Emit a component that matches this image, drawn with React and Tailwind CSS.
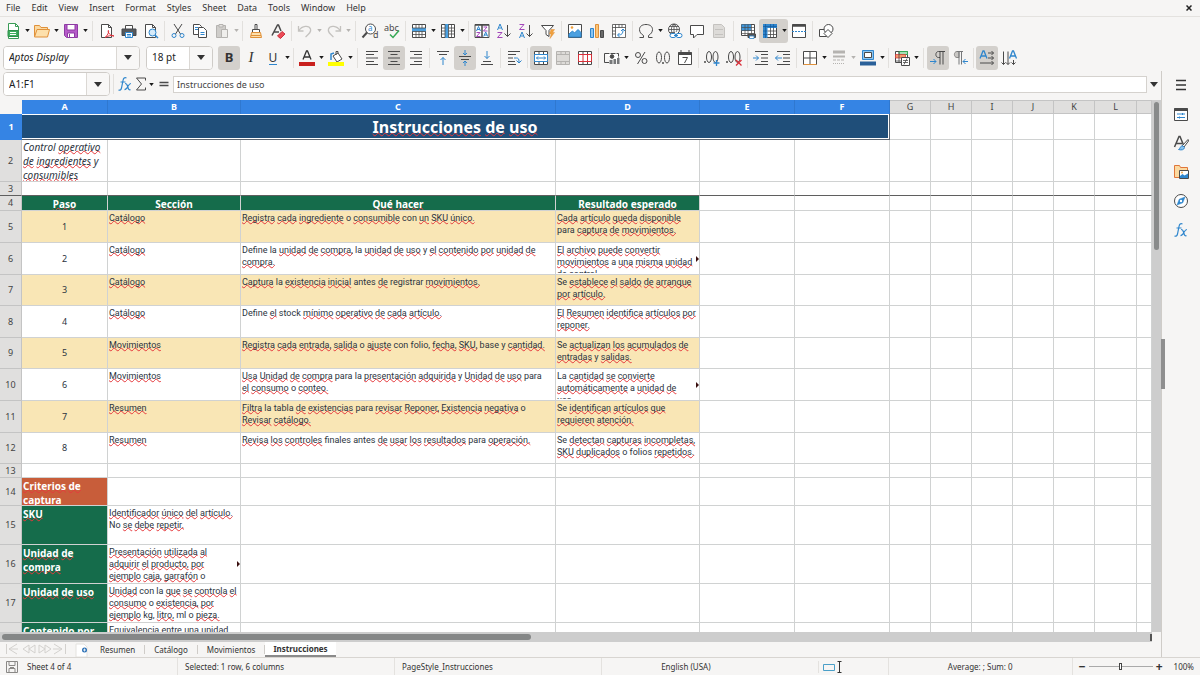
import { useState } from 'react';

const ICONS = {
  newSheet: (
    <>
      <path d="M3.5.5h7l3 3v12h-10z" fill="#fff" stroke="#3a9c56" />
      <path d="M10.5.5v3h3" stroke="#3a9c56" />
      <path d="M3 7.500h10v6H3z" fill="#3fae5f" stroke="#2f8f4b" />
      <path d="M5 9.500h6M5 11.500h6" stroke="#fff" />
    </>
  ),
  open: (
    <>
      <path d="M.5 13.500V2.500h5l1.500 2h6.500v2" fill="#fbd9a0" stroke="#e0913a" />
      <path d="M.5 14L3 6.500h12.500L13.500 14z" fill="#fde0ac" stroke="#e0913a" />
    </>
  ),
  save: (
    <>
      <path d="M1.500 1.500h13v13h-11l-2-2z" fill="#b65bc9" stroke="#8d3ba3" />
      <path d="M4 1.500h8V7H4z" fill="#fff" stroke="#8d3ba3" />
      <path d="M4.500 10h7v4.500h-7z" fill="#fff" stroke="#8d3ba3" />
      <path d="M6.500 11v3" stroke="#8d3ba3" />
    </>
  ),
  pdf: (
    <>
      <path d="M2.500 1.500h7l3 3v10h-10z" fill="#fff" />
      <path d="M9.500 1.500v3h3" />
      <path d="M6 14.500c3-2 4-6 3.500-7-.8-.6-.6 5 5.500 5.500-3-1.200-6 0-9 1.500z" stroke="#e0303a" />
    </>
  ),
  print: (
    <>
      <path d="M4.500 6V2.500h7V6" fill="#fff" />
      <path d="M1 6h14v6.500H1z" fill="#56595c" stroke="#44474a" />
      <path d="M4.500 9.500h7v5h-7z" fill="#fff" stroke="#2f86cd" />
      <path d="M6 11.500h4M6 13h4" stroke="#2f86cd" />
    </>
  ),
  preview: (
    <>
      <path d="M2.500 1.500h7l3 3v10h-10z" fill="#fff" />
      <path d="M9.500 1.500v3h3" />
      <circle cx="9.500" cy="9.500" r="3.500" fill="#d6ebfa" stroke="#2f86cd" />
      <path d="M12 12l3 3" stroke="#2f86cd" strokeWidth="1.500" />
    </>
  ),
  cut: (
    <>
      <path d="M4 1l6.500 10M12 1L5.500 11" />
      <circle cx="4" cy="12.500" r="2" stroke="#2f86cd" />
      <circle cx="12" cy="12.500" r="2" stroke="#2f86cd" />
    </>
  ),
  copy: (
    <>
      <path d="M1.500 1.500h6l2 2v8h-8z" fill="#fff" />
      <path d="M6.500 4.500h5l3 3v7h-8z" fill="#fff" />
      <path d="M3 4.500h3M3 6.500h3M8.500 9.500h4M8.500 11.500h4" stroke="#2f86cd" />
    </>
  ),
  paste: (
    <g stroke="#b5b3b0">
      <path d="M2.500 2.500h9v12h-9z" fill="#cfcdca" />
      <path d="M5 1.500h4v2.500H5z" fill="#e4e2df" />
      <path d="M7.500 6.500h6v8h-6z" fill="#efeeec" />
    </g>
  ),
  brush: (
    <>
      <path d="M7 1.500h2v5H7zM4.500 6.500h7v3h-7z" fill="#fff" />
      <path d="M3.500 9.500h9l1 5h-11z" fill="#fde0ac" stroke="#e0913a" />
      <path d="M3 12.500h10" stroke="#e0913a" />
    </>
  ),
  clear: (
    <>
      <path d="M2 12.500L7.500 2h1L11 8M4 9h5" strokeWidth="1.500" />
      <path d="M7.500 13l4.500-4.500 3 2.500-4.500 4.500z" fill="#ed4b57" stroke="#c9303c" />
    </>
  ),
  undo: <path d="M1.500 3v5h5M2 7.500C5 2.500 12 2 13.500 6c1 3-1.500 5-5 8" stroke="#c4c2bf" strokeWidth="1.300" />,
  redo: <path d="M14.500 3v5h-5M14 7.500C11 2.500 4 2 2.500 6c-1 3 1.500 5 5 8" stroke="#c4c2bf" strokeWidth="1.300" />,
  find: (
    <>
      <circle cx="8.500" cy="6" r="5" fill="#fff" />
      <path d="M5 9.500L.5 14.500" strokeWidth="2" />
      <text x="6" y="8" fontSize="8" fill="#2f86cd" stroke="none" fontFamily="Noto Sans">a</text>
      <text x="11" y="15" fontSize="9" fill="#4a4a4a" stroke="none" fontFamily="Noto Sans">d</text>
    </>
  ),
  spell: (
    <>
      <text x="0" y="8" fontSize="9" fill="#4a4a4a" stroke="none" fontFamily="Noto Sans">abc</text>
      <path d="M6 11.500l3 3 6-7" stroke="#35a854" strokeWidth="1.500" />
    </>
  ),
  rows: (
    <>
      <path d="M1.500 1.500h13v13h-13z" fill="#fff" />
      <path d="M1 5h14v3.500H1z" fill="#4ba0e0" stroke="none" />
      <path d="M1.500 5h13M1.500 8.500h13M1.500 11.500h13M5 1.500v3.500M8 1.500v3.500M11 1.500v3.500M5 8.500v6M8 8.500v6M11 8.500v6" strokeWidth=".8" />
    </>
  ),
  cols: (
    <>
      <path d="M1.500 1.500h13v13h-13z" fill="#fff" />
      <path d="M5 1h3.500v14H5z" fill="#4ba0e0" stroke="none" />
      <path d="M5 1.500v13M8.500 1.500v13M11.500 1.500v13M1.500 5H5M1.500 8H5M1.500 11H5M8.500 5h6M8.500 8h6M8.500 11h6" strokeWidth=".8" />
    </>
  ),
  sort: (
    <>
      <path d="M1 1.500h14v13H1z" fill="#fff" />
      <path d="M1 2h14M8 2v12.500" strokeWidth="1.500" />
      <path d="M2.500 8L4.500 3.500 6.500 8M3 6.500h3M9.700 13.500l2-4.500 2 4.500M10.200 12h3" stroke="#2f86cd" />
      <path d="M2.500 9.500h3.500l-3.500 4h4M9.500 4h3.500L9.500 8h4" stroke="#a347ba" />
    </>
  ),
  az: (
    <>
      <path d="M1.500 7L4 1l2.500 6M2.500 5h3" stroke="#2f86cd" />
      <path d="M1.500 9.500H6l-4.500 5h5" stroke="#a347ba" />
      <path d="M11.500 2v11.500M8.500 10.500l3 3 3-3" />
    </>
  ),
  za: (
    <>
      <path d="M1.500 1.500H6l-4.500 5h5" stroke="#a347ba" />
      <path d="M1.500 15L4 9l2.500 6M2.500 13h3" stroke="#2f86cd" />
      <path d="M11.500 2v11.500M8.500 10.500l3 3 3-3" />
    </>
  ),
  filter: (
    <>
      <path d="M1.500 2.500h12l-4.500 5v6l-3-2v-4z" fill="#fff" />
      <path d="M11 6.500h3.500l-2 3h2l-4.500 6 1.200-4.500H9.500z" fill="#f0a03c" stroke="#e0913a" strokeWidth=".5" />
    </>
  ),
  image: (
    <>
      <path d="M1.500 1.500h13v13h-13z" fill="#fff" />
      <path d="M2 14v-3l3.500-3 2 2L11 6.500l3 3V14z" fill="#4ba0e0" stroke="#2f86cd" />
      <circle cx="5" cy="4.500" r="1.300" fill="#f0a03c" stroke="none" />
    </>
  ),
  chart: (
    <>
      <path d="M1.500 5.500h3v9h-3z" fill="#8cc5f0" stroke="#2f86cd" />
      <path d="M6.500 1.500h3v13h-3z" fill="#fbc67c" stroke="#e0913a" />
      <path d="M11.500 7.500h3v7h-3z" fill="#6a6a6a" />
    </>
  ),
  pivot: (
    <>
      <path d="M1.500 1.500h13v13h-13zM1.500 4.500h13M4.500 1.500v13M8 1.500v3M11 1.500v3M1.500 8h3M1.500 11h3" fill="#fff" strokeWidth=".8" />
      <path d="M12 6.500c0 4-1 5.500-5 5.500M10 8l2-2 2 2M8.500 10l-2 2 2 2" stroke="#2f86cd" />
    </>
  ),
  omega: <path d="M1.500 14.500h4v-2C3 11 1.500 9 1.500 6.500 1.500 3.500 4 1.500 8 1.500s6.500 2 6.500 5c0 2.500-1.500 4.500-4 6v2h4" />,
  link: (
    <>
      <circle cx="7" cy="6.500" r="5.500" fill="#fff" />
      <path d="M1.500 6.500h11M7 1v11M3 3.500h8M3 9.500h5M7 1C3.500 4 3.500 9 7 12M7 1c3.500 3 3.500 6 2 8" strokeWidth=".8" />
      <rect x="3" y="10.500" width="6" height="4" rx="2" fill="#fff" stroke="#2f86cd" />
      <rect x="9" y="10.500" width="6" height="4" rx="2" fill="#fff" stroke="#2f86cd" />
      <path d="M7 12.500h4" stroke="#2f86cd" />
    </>
  ),
  comment: <path d="M1.500 2.500h13v9H8L4.500 15v-3.500h-3z" fill="#fff" />,
  header: (
    <g stroke="#c4c2bf">
      <path d="M2.500 1.500h8l3 3v10h-11z" fill="#dddbd8" />
      <path d="M4 6.500h8M4 11.500h8" />
    </g>
  ),
  printRange: (
    <>
      <path d="M1.500 1.500h13v11h-13z" fill="#fff" />
      <path d="M1.500 1.500H11V8H1.500z" fill="#3f97dc" stroke="none" />
      <path d="M1.500 4.500h13M1.500 7.500h13M1.500 10.500h13M5 1.500v11M8 1.500v11M11.500 1.500v11" strokeWidth=".7" />
      <path d="M8 11h7.500v3.500H8z" fill="#56595c" />
      <path d="M9.500 13h4.500v2.500H9.500z" fill="#fff" stroke="#2f86cd" strokeWidth=".8" />
    </>
  ),
  freeze: (
    <>
      <path d="M1.500 1.500h13v13h-13z" fill="#fff" />
      <path d="M1 1h14v4H5.500v10H1z" fill="#2f86cd" stroke="none" />
      <path d="M8.500 5v10M11.500 5v10M5.500 8h9M5.500 11.500h9" strokeWidth=".8" />
      <path d="M1 3.500h14M3.500 1v14M1 8h4M1 11.500h4M8.500 1v4M11.500 1v4" stroke="#155a9c" strokeWidth=".7" />
    </>
  ),
  split: (
    <>
      <path d="M1.500 1.500h13v13h-13z" fill="#fff" />
      <path d="M1.500 2.500h13" strokeWidth="2.500" />
      <path d="M1 8.500h14" stroke="#2f86cd" strokeDasharray="2 1" />
    </>
  ),
  shapes: (
    <>
      <path d="M1.500 6.500h7v7h-7z" fill="#fff" />
      <circle cx="10.500" cy="6" r="4.500" fill="#fff" />
      <path d="M10 6.500l4 4-4 4-4-4z" fill="#fff" />
    </>
  ),
  fontColor: (
    <>
      <path d="M4 9.500L7.500 1h1L12 9.500M5.500 7h5" stroke="#333" strokeWidth="1.300" />
      <path d="M0 14h16" stroke="#c9211e" strokeWidth="4" />
    </>
  ),
  highlight: (
    <>
      <path d="M3 10V4l3-1" stroke="#2f86cd" strokeWidth="1.500" />
      <path d="M5 6l5-3 4 6-5 3zM10 3V1.500h-2V5" fill="#fff" />
      <path d="M0 14h16" stroke="#ffff00" strokeWidth="4" />
    </>
  ),
  left: <path d="M2 1.500h12M2 4.500h8M2 8h12M2 11.500h8M2 14.500h12" />,
  center: <path d="M2 1.500h12M4.500 4.500h7M2 8h12M4.500 11.500h7M2 14.500h12" />,
  right: <path d="M2 1.500h12M6 4.500h8M2 8h12M6 11.500h8M2 14.500h12" />,
  top: (
    <>
      <path d="M2 1.500h12M4 4.500h8" />
      <path d="M8 15V7.500M5.500 10L8 7.500l2.500 2.500" stroke="#2f86cd" />
    </>
  ),
  middle: (
    <>
      <path d="M2 6.500h12M4 9.500h8" />
      <path d="M8 0v5M6 3l2 2 2-2M8 16v-5M6 13l2-2 2 2" stroke="#2f86cd" />
    </>
  ),
  bottom: (
    <>
      <path d="M4 11.500h8M2 14.500h12" />
      <path d="M8 1v7.500M5.500 6L8 8.500 10.500 6" stroke="#2f86cd" />
    </>
  ),
  wrap: (
    <>
      <path d="M2 1.500h12M2 4.500h8M2 8h5M2 11.500h7M2 14.500h8" />
      <path d="M8 8h2.500c2 0 2.500 1 2.500 4M10.500 10.500l2.500 2.500 2.500-2.500" stroke="#2f86cd" />
    </>
  ),
  merge: (
    <>
      <path d="M1.500 1.500h13v13h-13zM6 1.500v3M10.500 1.500v3M6 11.500v3M10.500 11.500v3" fill="#fff" />
      <path d="M1.500 4.500h13v7h-13z" fill="#fff" stroke="#2f86cd" />
      <path d="M3.500 8h9M5 6.500L3.500 8 5 9.500M11 6.500L12.500 8 11 9.500" stroke="#2f86cd" />
    </>
  ),
  mergeOff: (
    <path d="M1.500 1.500h13v13h-13zM1.500 4.500h13M1.500 11.500h13M6 1.500v3M10.500 1.500v3M6 11.500v3M10.500 11.500v3" fill="#dddbd8" stroke="#b5b3b0" />
  ),
  unmerge: (
    <>
      <path d="M1.500 1.500h13v13h-13zM6 1.500v3M10.500 1.500v3M6 11.500v3M10.500 11.500v3" fill="#fff" />
      <path d="M1.500 4.500h13v7h-13zM6 4.500v7M10.500 4.500v7" stroke="#d9303a" />
    </>
  ),
  currency: (
    <>
      <path d="M.5 3.500h14v8" fill="#fff" strokeDasharray="5 1" />
      <path d="M.5 3.500v9H5" />
      <circle cx="8" cy="6.500" r="1.800" fill="#4a4a4a" />
      <path d="M5.500 10h3v4h-3zM9.500 9h2.500v5H9.500zM13 8h2.500v6H13z" fill="#77797b" stroke="none" />
    </>
  ),
  percent: (
    <>
      <circle cx="5" cy="5" r="2.500" />
      <circle cx="11.500" cy="11" r="2.500" />
      <path d="M12 2L4.500 14" />
    </>
  ),
  number: (
    <>
      <ellipse cx="4" cy="7.500" rx="2.500" ry="5.500" />
      <ellipse cx="12" cy="7.500" rx="2.500" ry="5.500" />
      <path d="M8 12v2" strokeWidth="1.500" />
    </>
  ),
  date: (
    <>
      <path d="M1.500 2.500h13v12h-13z" fill="#fff" />
      <path d="M1.500 3.500h13" strokeWidth="3" />
      <path d="M4 0v3M12 0v3M5.500 7.500h5l-3 5.500" />
    </>
  ),
  addDecimal: (
    <>
      <path d="M1 11v2" strokeWidth="1.500" />
      <ellipse cx="5" cy="7" rx="2.500" ry="5.500" />
      <ellipse cx="11.500" cy="7" rx="2.500" ry="5.500" />
      <path d="M9.500 13h6M12.500 10v6" stroke="#2f86cd" strokeWidth="1.300" />
    </>
  ),
  removeDecimal: (
    <>
      <path d="M1 11v2" strokeWidth="1.500" />
      <ellipse cx="5" cy="7" rx="2.500" ry="5.500" />
      <ellipse cx="11.500" cy="7" rx="2.500" ry="5.500" />
      <path d="M10 10l5.500 5.500M15.500 10L10 15.500" stroke="#d9303a" strokeWidth="1.300" />
    </>
  ),
  indent: (
    <>
      <path d="M2 1.500h13M8 4.500h7M8 8h7M8 11.500h7M2 14.500h13" />
      <path d="M0 8h5.500M3 5.500L5.500 8 3 10.500" stroke="#2f86cd" />
    </>
  ),
  outdent: (
    <>
      <path d="M2 1.500h13M8 4.500h7M8 8h7M8 11.500h7M2 14.500h13" />
      <path d="M.5 8H7M3 5.500L.5 8 3 10.500" stroke="#2f86cd" />
    </>
  ),
  borders: (
    <>
      <path d="M1.500 1.500h13v13h-13z" fill="#fff" />
      <path d="M8 1.500v13M1.500 8h13" />
      <path d="M1.500 14.500h13" stroke="#e0913a" />
    </>
  ),
  lineStyle: (
    <g stroke="#b5b3b0">
      <path d="M2 2h12" strokeWidth="3" />
      <path d="M2 6.500h12" strokeWidth="2" />
      <path d="M2 10h12" strokeDasharray="3 1" />
      <path d="M2 13.500h12" strokeDasharray="1 1" />
    </g>
  ),
  borderColor: (
    <>
      <path d="M2.500.5h11v9h-11z" fill="#8cc5f0" stroke="#2f86cd" />
      <path d="M4.500 2.500h7v5h-7z" fill="#fff" />
      <path d="M0 13.500h16" stroke="#2a6099" strokeWidth="4" />
    </>
  ),
  conditional: (
    <>
      <path d="M1.500 1.500h12v11h-12z" fill="#fff" />
      <path d="M5 1.500h8.500v3H5z" fill="#a5dfb5" stroke="#35a854" />
      <path d="M1.500 4.500h10v3.500h-10z" fill="#f59a6c" stroke="#d9303a" strokeWidth=".7" />
      <path d="M1.500 11h6M5 1.500v11" strokeWidth=".8" />
      <path d="M7.500 7.500h8v8h-8z" fill="#fff" />
      <path d="M9 10.500h5M9 12.500h5M13 8.500l-3 6" strokeWidth=".8" />
    </>
  ),
  ltr: (
    <>
      <path d="M15 1.500H8.500C5 1.500 5 7.500 8.500 7.500H10M10 1.500v13M13 1.500v13" />
      <path d="M0 11.500h6M3.500 9L6 11.500 3.500 14" stroke="#2f86cd" />
    </>
  ),
  rtl: (
    <>
      <path d="M5 1.500C1.500 1.500 1.500 7.500 5 7.500h2v-6z" fill="#c9c7c4" stroke="#8a8886" />
      <path d="M11 1.500H5M7 1.500v13M9.500 1.500v13" stroke="#77797b" />
      <path d="M16 11.500h-5M13.500 9L11 11.500l2.500 2.500" stroke="#2f86cd" />
    </>
  ),
  horizontal: (
    <>
      <path d="M1 8.500L4 1h1l3 7.500M2 6h5" stroke="#2f86cd" strokeWidth="1.300" />
      <path d="M9 3h5.500M12.500 1l2 2-2 2M9 8h5.500M12.500 6l2 2-2 2M1 13h13.500M12.500 11l2 2-2 2" />
    </>
  ),
  vertical: (
    <>
      <path d="M8.500 8.500L11.500 1h1l3 7.500M9.500 6h5" stroke="#2f86cd" strokeWidth="1.300" />
      <path d="M2.500 1.500v13M.5 12.500l2 2 2-2M7 1.500v13M5 12.500l2 2 2-2M12.500 10v4.500M10.500 12.500l2 2 2-2" />
    </>
  ),
  fx: (
    <g stroke="#2f86cd" strokeWidth="1.200">
      <path d="M9.500 2C7.500 1 6.500 2 6 4.500L4.500 12C4 14 3 14.500 1.500 14M3.500 6h5" />
      <path d="M8 7.500c1.500 0 2 .5 2.500 2.500l.8 2.500c.5 1.500 1 1.500 2.200 1.200M14 7.500c-1.500 0-2 1-3 2.700-1 2-1.800 3.500-3.500 3.500" />
    </g>
  ),
  sum: <path d="M12.500 4.500v-2.500h-9L8.500 8l-5 6h9v-2.500" />,
  equals: <path d="M3.500 6.500h9M3.500 9.500h9" strokeWidth="1.500" />,
  menu: <path d="M3 3.500h10M3 8h10M3 12.500h10" stroke="#333" strokeWidth="1.500" />,
  properties: (
    <>
      <path d="M1.500 2.500h13v12h-13z" fill="#fff" />
      <path d="M1.500 3.500h13" strokeWidth="3" />
      <path d="M4 8h8M4 11.500h8M9.500 7v2M6.500 10.500v2" stroke="#2f86cd" />
    </>
  ),
  styles: (
    <>
      <path d="M1.500 12L6 1.500h1L10.500 10M3 8.500h6" strokeWidth="1.500" />
      <path d="M15 4.500L9.500 10.500l1.500 1.500 4.500-6z" fill="#fff" />
      <path d="M10 11c-2-.5-2.500 1-3 2-.5 1-1.500 1.500-1.500 1.500 3 .8 5.500.5 6-2z" fill="#8cc5f0" stroke="#2f86cd" />
    </>
  ),
  gallery: (
    <>
      <path d="M1.500 13.500v-12h5l1 2h7v10z" fill="#fbd9a0" stroke="#e0763a" />
      <path d="M6.500 6.500h9v8h-9z" fill="#fff" />
      <path d="M7 14v-2l2.500-2 2 1.500L15 9.500V14z" fill="#2f86cd" stroke="none" />
      <circle cx="9" cy="8.500" r=".9" fill="#f0a03c" stroke="none" />
    </>
  ),
  navigator: (
    <>
      <circle cx="8" cy="8" r="6.500" fill="#fff" />
      <path d="M12 4L9.800 9.800 4 12l2.200-5.800z" fill="#2f86cd" stroke="#2f86cd" strokeWidth=".5" />
      <circle cx="8" cy="8" r="1.200" fill="#fff" stroke="none" />
    </>
  ),
  saveState: (
    <g stroke="#8a8886">
      <path d="M2.500 2.500h11v11h-11zM5 2.500v4h6v-4M5 13.500v-4h6v4" />
      <path d="M6 8.500h4" />
    </g>
  ),
};

function Icon({ name }) {
  return (
    <svg viewBox="0 0 16 16" className="size-4 shrink-0 overflow-visible" fill="none" stroke="#4a4a4a" aria-hidden="true">
      {ICONS[name]}
    </svg>
  );
}

function Caret({ dim }) {
  return (
    <svg viewBox="0 0 6 4" className="h-[3px] w-[5px] shrink-0" aria-hidden="true">
      <path d="M0 0h6L3 4z" fill={dim ? '#b5b3b0' : '#1a1a1a'} />
    </svg>
  );
}

function Tool({ name, active, menu, dim, children }) {
  return (
    <div className={active ? 'flex items-center rounded-[3px] bg-[#d3d0cc]' : 'flex items-center'}>
      <button type="button" aria-label={name} className="flex h-6 w-[22px] items-center justify-center">
        {children || <Icon name={name} />}
      </button>
      {menu && (
        <button type="button" aria-label={name + ' options'} className="flex h-6 w-[7px] items-center justify-center">
          <Caret dim={dim} />
        </button>
      )}
    </div>
  );
}

function Sep({ wide }) {
  return (
    <div className={wide ? 'flex w-[7px] justify-center' : 'flex w-[5px] justify-center'}>
      <div className="h-5 w-px bg-[#e2e0dd]" />
    </div>
  );
}

function Combo({ label, value, box, input }) {
  return (
    <div className={'flex h-6 overflow-hidden rounded-[4px] border border-[#cfccc8] bg-white ' + box}>
      <input aria-label={label} defaultValue={value} className={'min-w-0 flex-1 bg-white pl-[5px] text-[10px] text-[#222] outline-none ' + input} />
      <button type="button" aria-label={label + ' list'} className="flex w-[23px] items-center justify-center border-l border-[#dbd8d4] bg-[#f8f7f6]">
        <svg viewBox="0 0 8 5" className="h-[5px] w-2" aria-hidden="true"><path d="M0 0h8L4 5z" fill="#333" /></svg>
      </button>
    </div>
  );
}

const MENUS = ['File', 'Edit', 'View', 'Insert', 'Format', 'Styles', 'Sheet', 'Data', 'Tools', 'Window', 'Help'];
const COLUMNS = ['A', 'B', 'C', 'D', 'E', 'F', 'G', 'H', 'I', 'J', 'K', 'L'];
const EMPTY = ['E', 'F', 'G', 'H', 'I', 'J', 'K', 'L', ''];

// words the English dictionary accepts, so they get no red wave
const KNOWN = ['a', 'o', 'y', 'la', 'La', 'con', 'para', 'Define', 'antes', 'registrar', 'stock', 'folio,', 'folios', 'base', 'tabla', 'finales', 'Se', 'No', 'Control', 'kg,', 'ml', 'entre'];

function Spell({ text }) {
  return text.split('\n').map((line) => (
    <span key={line} className="block whitespace-nowrap">
      {line.split(' ').map((word, i) => (
        <span key={i}>
          {i > 0 && ' '}
          {KNOWN.includes(word) ? word : (
            <span className="underline decoration-[#e5383b] decoration-wavy decoration-1 underline-offset-[-1px] [text-decoration-skip-ink:none]">{word}</span>
          )}
        </span>
      ))}
    </span>
  ));
}

const STEPS = [
  { n: 5, h: 'h-8', section: 'Catálogo', what: 'Registra cada ingrediente o consumible con un SKU único.', result: 'Cada artículo queda disponible\npara captura de movimientos.' },
  { n: 6, h: 'h-8', section: 'Catálogo', what: 'Define la unidad de compra, la unidad de uso y el contenido por unidad de\ncompra.', result: 'El archivo puede convertir\nmovimientos a una misma unidad\nde control.', more: true },
  { n: 7, h: 'h-[31px]', section: 'Catálogo', what: 'Captura la existencia inicial antes de registrar movimientos.', result: 'Se establece el saldo de arranque\npor artículo.' },
  { n: 8, h: 'h-8', section: 'Catálogo', what: 'Define el stock mínimo operativo de cada artículo.', result: 'El Resumen identifica artículos por\nreponer.' },
  { n: 9, h: 'h-[31px]', section: 'Movimientos', what: 'Registra cada entrada, salida o ajuste con folio, fecha, SKU, base y cantidad.', result: 'Se actualizan los acumulados de\nentradas y salidas.' },
  { n: 10, h: 'h-8', section: 'Movimientos', what: 'Usa Unidad de compra para la presentación adquirida y Unidad de uso para\nel consumo o conteo.', result: 'La cantidad se convierte\nautomáticamente a unidad de\nuso.', more: true },
  { n: 11, h: 'h-8', section: 'Resumen', what: 'Filtra la tabla de existencias para revisar Reponer, Existencia negativa o\nRevisar catálogo.', result: 'Se identifican artículos que\nrequieren atención.' },
  { n: 12, h: 'h-[31px]', section: 'Resumen', what: 'Revisa los controles finales antes de usar los resultados para operación.', result: 'Se detectan capturas incompletas,\nSKU duplicados o folios repetidos.' },
];

const TERMS = [
  { n: 15, term: 'SKU', text: 'Identificador único del artículo.\nNo se debe repetir.' },
  { n: 16, term: 'Unidad de\ncompra', text: 'Presentación utilizada al\nadquirir el producto, por\nejemplo caja, garrafón o', more: true },
  { n: 17, term: 'Unidad de uso', text: 'Unidad con la que se controla el\nconsumo o existencia, por\nejemplo kg, litro, ml o pieza.' },
  { n: '', term: 'Contenido por', text: 'Equivalencia entre una unidad' },
];

const HEAD = 'border-r border-b border-[#c4c4c4] bg-[#e0dfde] p-0 font-normal text-[9px] text-[#444]';
const CELL = 'relative border-r border-b border-[#d0d2d2] p-0';
const BODY = "overflow-hidden pt-px pl-px font-[Roboto,'Noto_Sans',sans-serif] text-[9px]";

function RowHead({ children, edge }) {
  return <th scope="row" className={edge ? HEAD + ' border-b-[#5f5f5f]' : HEAD}>{children}</th>;
}

function Blanks({ from = 0, edge }) {
  return EMPTY.slice(from).map((c, i) => <td key={i} className={edge ? CELL + ' border-b-[#5f5f5f]' : CELL} />);
}

function More() {
  return <span className="absolute top-1/2 right-0 -translate-y-1/2 border-y-[3px] border-l-[3px] border-y-transparent border-l-[#3a1010]" />;
}

function Sheet() {
  return (
    <table className="w-full table-fixed border-separate border-spacing-0 leading-3 text-[#2c3440]">
      <colgroup>
        <col className="w-[22px]" />
        <col className="w-[86px]" />
        <col className="w-[133px]" />
        <col className="w-[315px]" />
        <col className="w-[144px]" />
        <col className="w-[95px]" />
        <col className="w-[95px]" />
        <col className="w-[41px]" />
        <col className="w-[41px]" />
        <col className="w-[41px]" />
        <col className="w-[41px]" />
        <col className="w-[41px]" />
        <col className="w-[42px]" />
        <col />
      </colgroup>
      <thead>
        <tr className="h-[14px]">
          <td className="bg-[#f6f5f4]" />
          {COLUMNS.map((c, i) => (
            <th key={c} scope="col" className={i < 6 ? 'border-r border-r-[#2f78d0] bg-[#3584e4] p-0 text-[9px] font-bold text-white' : HEAD + ' border-t'}>
              {c}
            </th>
          ))}
          <td className={HEAD + ' border-t'} />
        </tr>
      </thead>
      <tbody>
        <tr className="h-[26px]">
          <th scope="row" className="bg-[#3584e4] p-0 text-[9px] font-bold text-white">1</th>
          <td colSpan={6} className="border-r border-b border-[#5a6470] bg-white p-0 align-top">
            <div className="flex h-[25px] items-center justify-center border border-l-0 border-white bg-[#1f4e79] pt-px text-[16px] leading-5 font-bold text-white">
              <Spell text="Instrucciones de uso" />
            </div>
          </td>
          <Blanks from={2} />
        </tr>
        <tr className="h-[42px]">
          <RowHead>2</RowHead>
          <td className={CELL + ' align-top'}>
            <div className="h-[41px] overflow-hidden pl-px text-[10px] leading-[14px] italic">
              <Spell text={'Control operativo\nde ingredientes y\nconsumibles'} />
            </div>
          </td>
          <td className={CELL} /><td className={CELL} /><td className={CELL} />
          <Blanks />
        </tr>
        <tr className="h-[14px]">
          <RowHead edge>3</RowHead>
          {['A', 'B', 'C', 'D'].map((c) => <td key={c} className={CELL + ' border-b-[#5f5f5f]'} />)}
          <Blanks edge />
        </tr>
        <tr className="h-[15px]">
          <RowHead>4</RowHead>
          {['Paso', 'Sección', 'Qué hacer', 'Resultado esperado'].map((t) => (
            <td key={t} className={CELL + ' bg-[#156c4b] text-center align-top text-[10px] font-bold text-white'}>
              <div className="h-[14px] overflow-hidden leading-4"><Spell text={t} /></div>
            </td>
          ))}
          <Blanks />
        </tr>
        {STEPS.map((s, i) => {
          const cell = i % 2 === 0 ? CELL + ' bg-[#f9e6b5]' : CELL;
          return (
            <tr key={s.n} className={s.h}>
              <RowHead>{s.n}</RowHead>
              <td className={cell + ' text-center text-[9px]'}>{i + 1}</td>
              <td className={cell + ' align-top'}><div className={BODY + ' h-[30px]'}><Spell text={s.section} /></div></td>
              <td className={cell + ' align-top'}><div className={BODY + ' h-[30px]'}><Spell text={s.what} /></div></td>
              <td className={cell + ' align-top'}>
                <div className={BODY + ' h-[30px]'}><Spell text={s.result} /></div>
                {s.more && <More />}
              </td>
              <Blanks />
            </tr>
          );
        })}
        <tr className="h-[14px]">
          <RowHead>13</RowHead>
          <td className={CELL} /><td className={CELL} /><td className={CELL} /><td className={CELL} />
          <Blanks />
        </tr>
        <tr className="h-7">
          <RowHead>14</RowHead>
          <td className={CELL + ' bg-[#c85d3a] align-top text-[10px] font-bold text-white'}>
            <div className="h-[27px] overflow-hidden pt-px pl-px leading-[14px]"><Spell text={'Criterios de\ncaptura'} /></div>
          </td>
          <td className={CELL} /><td className={CELL} /><td className={CELL} />
          <Blanks />
        </tr>
        {TERMS.map((t) => (
          <tr key={t.term} className="h-[39px]">
            <RowHead>{t.n}</RowHead>
            <td className={CELL + ' bg-[#156c4b] align-top text-[10px] font-bold text-white'}>
              <div className="h-[38px] overflow-hidden pt-px pl-px leading-[14px]"><Spell text={t.term} /></div>
            </td>
            <td className={CELL + ' align-top'}>
              <div className={BODY + ' h-[38px]'}><Spell text={t.text} /></div>
              {t.more && <More />}
            </td>
            <td className={CELL} /><td className={CELL} />
            <Blanks />
          </tr>
        ))}
      </tbody>
    </table>
  );
}

export default function App() {
  const [tab, setTab] = useState('Instrucciones');
  const [zoom, setZoom] = useState(100);

  return (
    <div className="flex h-screen flex-col overflow-hidden bg-[#f6f5f4] font-['Noto_Sans',sans-serif] text-[8px] text-[#333]">
      <nav className="flex h-[17px] shrink-0 items-center gap-[11px] border-b border-[#e4e2df] pr-2 pl-[6px] text-[9px]">
        {MENUS.map((m) => <button key={m} type="button">{m}</button>)}
        <button type="button" aria-label="Close document" className="ml-auto">
          <svg viewBox="0 0 6 6" className="size-[6px]" stroke="#222" strokeWidth="1.500" aria-hidden="true"><path d="M.5.5l5 5M5.500.5l-5 5" /></svg>
        </button>
      </nav>

      <div className="flex h-[27px] shrink-0 items-center pl-[2px]">
        <Tool name="newSheet" menu /><Tool name="open" menu /><Tool name="save" menu />
        <Sep wide />
        <Tool name="pdf" /><Tool name="print" /><Tool name="preview" />
        <Sep />
        <Tool name="cut" /><Tool name="copy" /><Tool name="paste" menu dim />
        <Sep />
        <Tool name="brush" /><Tool name="clear" />
        <Sep />
        <Tool name="undo" menu dim /><Tool name="redo" menu dim />
        <Sep wide />
        <Tool name="find" /><Tool name="spell" />
        <Sep />
        <Tool name="rows" menu /><Tool name="cols" menu />
        <Sep />
        <Tool name="sort" /><Tool name="az" /><Tool name="za" /><Tool name="filter" />
        <Sep />
        <Tool name="image" /><Tool name="chart" /><Tool name="pivot" />
        <Sep />
        <Tool name="omega" menu /><Tool name="link" /><Tool name="comment" /><Tool name="header" />
        <Sep wide />
        <Tool name="printRange" /><Tool name="freeze" menu active /><Tool name="split" />
        <Sep />
        <Tool name="shapes" />
      </div>

      <div className="flex h-[27px] shrink-0 items-center pl-[3px]">
        <Combo label="Font name" value="Aptos Display" box="w-[137px]" input="italic" />
        <Combo label="Font size" value="18 pt" box="ml-[6px] mr-[5px] w-[67px]" input="" />
        <Tool name="bold" active><span className="text-[13px] font-bold">B</span></Tool>
        <Tool name="italic"><span className="font-['Liberation_Serif',serif] text-[15px] italic">I</span></Tool>
        <Tool name="underline" menu><span className="border-b border-[#2f86cd] text-[12px] leading-[13px]">U</span></Tool>
        <Sep />
        <Tool name="fontColor" menu /><Tool name="highlight" menu />
        <Sep wide />
        <Tool name="left" /><Tool name="center" active /><Tool name="right" />
        <Sep />
        <Tool name="top" /><Tool name="middle" active /><Tool name="bottom" />
        <Sep />
        <Tool name="wrap" />
        <Sep />
        <Tool name="merge" active /><Tool name="mergeOff" /><Tool name="unmerge" />
        <Sep />
        <Tool name="currency" menu /><Tool name="percent" /><Tool name="number" /><Tool name="date" />
        <Sep />
        <Tool name="addDecimal" /><Tool name="removeDecimal" />
        <Sep />
        <Tool name="indent" /><Tool name="outdent" />
        <Sep />
        <Tool name="borders" menu /><Tool name="lineStyle" menu dim /><Tool name="borderColor" menu />
        <Sep />
        <Tool name="conditional" menu />
        <Sep wide />
        <Tool name="ltr" active /><Tool name="rtl" />
        <Sep />
        <Tool name="horizontal" active /><Tool name="vertical" />
      </div>

      <div className="flex min-h-0 flex-1">
        <main className="flex min-w-0 flex-1 flex-col">
          <div className="flex h-[29px] shrink-0 items-center pb-[3px] pl-[3px]">
            <Combo label="Name box" value="A1:F1" box="w-[107px]" input="" />
            <div className="mx-[3px] h-5 w-px bg-[#e2e0dd]" />
            <button type="button" aria-label="Function wizard"><Icon name="fx" /></button>
            <button type="button" aria-label="Select function" className="flex items-center"><Icon name="sum" /><Caret /></button>
            <button type="button" aria-label="Formula" className="mr-px ml-[2px]"><Icon name="equals" /></button>
            <input aria-label="Formula input" defaultValue="Instrucciones de uso" className="h-[17px] min-w-0 flex-1 border border-[#d5d2ce] bg-white pl-[3px] text-[9px] text-[#444] outline-none" />
            <button type="button" aria-label="Expand formula bar" className="flex w-[14px] items-center justify-center">
              <svg viewBox="0 0 8 5" className="h-[5px] w-2" aria-hidden="true"><path d="M0 0h8L4 5z" fill="#333" /></svg>
            </button>
          </div>

          <div className="flex min-h-0 flex-1">
            <div className="min-w-0 flex-1 overflow-hidden bg-white"><Sheet /></div>
            <div className="w-[9px] shrink-0 bg-[#cdcdcd] px-[2px] pt-[2px]">
              <div className="h-[28%] rounded-full bg-[#888a8a]" />
            </div>
          </div>
          <div className="mr-[9px] flex h-[10px] shrink-0 items-center justify-between bg-[#cdcdcd] pl-[2px]">
            <div className="h-[6px] w-[46%] rounded-full bg-[#858787]" />
            <div className="h-[7px] w-[2px] bg-[#555]" />
          </div>

          <div className="flex h-[15px] shrink-0 items-stretch">
            <svg viewBox="0 0 62 14" className="ml-[5px] h-[14px] w-[62px]" fill="none" stroke="#d3d1ce" aria-hidden="true">
              <path d="M1.500 2v10M12 2L4 7l8 5M4 7h9M24 3l-6 4 6 4zM30 3l-6 4 6 4zM34 3l6 4-6 4zM40 3l6 4-6 4zM49 2l8 5-8 5M57 7h-9M60.500 2v10" />
            </svg>
            <button type="button" aria-label="Add sheet" className="ml-2">
              <svg viewBox="0 0 14 14" className="size-[14px]" aria-hidden="true">
                <path d="M1 1h8l3 3v10H1z" fill="#fff" stroke="#e4e2df" />
                <circle cx="9.500" cy="7" r="2.500" fill="#2a6fb5" />
                <path d="M9.500 5.500v3M8 7h3" stroke="#fff" strokeWidth=".8" />
              </svg>
            </button>
            <div role="tablist" className="ml-[2px] flex">
              {['Resumen', 'Catálogo', 'Movimientos', 'Instrucciones'].map((t) => (
                <button
                  key={t}
                  type="button"
                  role="tab"
                  aria-selected={tab === t}
                  onClick={() => setTab(t)}
                  className={tab === t
                    ? 'border-b-2 border-[#8a8a8a] bg-white px-2 font-bold'
                    : 'my-[3px] border-r border-[#cfccc8] px-[9px] leading-[9px]'}
                >
                  {t}
                </button>
              ))}
            </div>
          </div>
        </main>

        <aside className="relative flex w-[39px] shrink-0 flex-col items-center gap-[13px] border-l border-[#cfccc8] pt-[6px]">
          <div className="absolute top-1/2 -left-px h-[50px] w-1 -translate-y-1/2 bg-[#8f8f8f]" />
          {['menu', 'properties', 'styles', 'gallery', 'navigator', 'fx'].map((n) => (
            <button key={n} type="button" aria-label={n}><Icon name={n} /></button>
          ))}
        </aside>
      </div>

      <footer className="flex h-[18px] shrink-0 items-center border-t border-[#d8d5d1] pr-[6px] pl-1 leading-[17px]">
        <Icon name="saveState" />
        <span className="w-[157px] pl-[7px]">Sheet 4 of 4</span>
        <span className="w-[217px] border-l border-[#e4e2df] pl-[7px]">Selected: 1 row, 6 columns</span>
        <span className="w-[207px] border-l border-[#e4e2df] pl-[7px]">PageStyle_Instrucciones</span>
        <span className="flex-1 border-l border-[#e4e2df] pr-12 text-center">English (USA)</span>
        <span className="flex w-[70px] items-center border-l border-[#e4e2df] pl-1">
          <svg viewBox="0 0 20 12" className="h-3 w-5" fill="none" aria-hidden="true">
            <path d="M.5 3.500h11v6H.5z" stroke="#4a9fc8" />
            <path d="M14.500.5h4M16.500.5v11M14.500 11.500h4" stroke="#333" />
          </svg>
        </span>
        <span className="w-[184px] border-l border-[#e4e2df] text-center">Average: ; Sum: 0</span>
        <div className="flex items-center gap-[3px] border-l border-[#e4e2df] pl-[6px]">
          <button type="button" aria-label="Zoom out" onClick={() => setZoom(zoom - 5)} className="text-[12px] font-bold">−</button>
          <input
            type="range"
            aria-label="Zoom"
            min="0"
            max="200"
            value={zoom}
            onChange={(e) => setZoom(Number(e.target.value))}
            className="h-2 w-16 appearance-none bg-[linear-gradient(#aaa,#aaa)] bg-[length:100%_1px] bg-center bg-no-repeat [&::-webkit-slider-thumb]:h-[7px] [&::-webkit-slider-thumb]:w-[3px] [&::-webkit-slider-thumb]:appearance-none [&::-webkit-slider-thumb]:border [&::-webkit-slider-thumb]:border-[#444] [&::-webkit-slider-thumb]:bg-white"
          />
          <button type="button" aria-label="Zoom in" onClick={() => setZoom(zoom + 5)} className="text-[12px] font-bold">+</button>
          <span className="pl-2">{zoom}%</span>
        </div>
      </footer>
    </div>
  );
}
